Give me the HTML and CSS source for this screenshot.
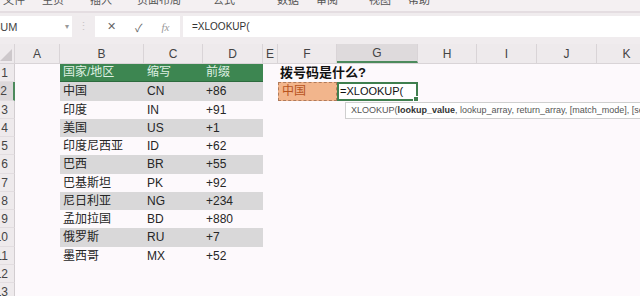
FILE: index.html
```html
<!DOCTYPE html>
<html lang="zh">
<head>
    <meta charset="UTF-8">
    <title>XLOOKUP</title>
    <link rel="stylesheet" href="styles.css">
</head>
<body>
    <div class="ribbon">
        <span class="tab w39">文件</span>
        <span class="tab w48">主页</span>
        <span class="tab w47">插入</span>
        <span class="tab w76">页面布局</span>
        <span class="tab w64">公式</span>
        <span class="tab w39">数据</span>
        <span class="tab w53">审阅</span>
        <span class="tab w39">视图</span>
        <span class="tab">帮助</span>
    </div>

    <div class="formula-bar">
        <div class="name-box"><span class="name">SUM</span><span class="arrow">▾</span></div>
        <div class="grip">⋮</div>
        <div class="fx-buttons">
            <span class="cancel">✕</span>
            <span class="enter">✓</span>
            <span class="fx">fx</span>
        </div>
        <div class="formula-input">=XLOOKUP(</div>
    </div>

    <div class="sheet">
        <div class="row col-head">
            <div class="corner"><svg width="12" height="12" viewBox="0 0 12 12"><polygon points="12,0 12,12 0,12" fill="#cdc8cb"/></svg></div>
            <div>A</div><div>B</div><div>C</div><div>D</div><div>E</div><div>F</div>
            <div class="active">G</div><div>H</div><div>I</div><div>J</div><div>K</div>
        </div>

        <div class="row">
            <div class="rh">1</div><div></div>
            <div class="cell head">国家/地区</div><div class="cell head">缩写</div><div class="cell head">前缀</div>
            <div></div><div class="cell title">拨号码是什么?</div>
        </div>
        <div class="row">
            <div class="rh active">2</div><div></div>
            <div class="cell alt">中国</div><div class="cell alt">CN</div><div class="cell alt">+86</div>
            <div></div><div class="cell lookup">中国</div>
            <div class="cell editing">=XLOOKUP(
                <div class="tooltip">XLOOKUP(<b>lookup_value</b>, lookup_array, return_array, [match_mode], [search_mode])</div>
            </div>
        </div>
        <div class="row">
            <div class="rh">3</div><div></div>
            <div class="cell">印度</div><div class="cell">IN</div><div class="cell">+91</div>
        </div>
        <div class="row">
            <div class="rh">4</div><div></div>
            <div class="cell alt">美国</div><div class="cell alt">US</div><div class="cell alt">+1</div>
        </div>
        <div class="row">
            <div class="rh">5</div><div></div>
            <div class="cell">印度尼西亚</div><div class="cell">ID</div><div class="cell">+62</div>
        </div>
        <div class="row">
            <div class="rh">6</div><div></div>
            <div class="cell alt">巴西</div><div class="cell alt">BR</div><div class="cell alt">+55</div>
        </div>
        <div class="row">
            <div class="rh">7</div><div></div>
            <div class="cell">巴基斯坦</div><div class="cell">PK</div><div class="cell">+92</div>
        </div>
        <div class="row">
            <div class="rh">8</div><div></div>
            <div class="cell alt">尼日利亚</div><div class="cell alt">NG</div><div class="cell alt">+234</div>
        </div>
        <div class="row">
            <div class="rh">9</div><div></div>
            <div class="cell">孟加拉国</div><div class="cell">BD</div><div class="cell">+880</div>
        </div>
        <div class="row">
            <div class="rh">10</div><div></div>
            <div class="cell alt">俄罗斯</div><div class="cell alt">RU</div><div class="cell alt">+7</div>
        </div>
        <div class="row">
            <div class="rh">11</div><div></div>
            <div class="cell">墨西哥</div><div class="cell">MX</div><div class="cell">+52</div>
        </div>
        <div class="row">
            <div class="rh">12</div>
        </div>
        <div class="row">
            <div class="rh">13</div>
        </div>
    </div>
</body>
</html>
```

FILE: styles.css
```css
body {
    margin: 0;
    width: 640px;
    height: 296px;
    overflow: hidden;
    background-color: #fdf9fc;
    font-family: 'Liberation Sans', 'Noto Sans CJK SC', sans-serif;
    color: #262626;
}

/* Ribbon tabs, cut off at the top */
.ribbon {
    display: flex;
    height: 11px;
    padding-left: 3px;
    overflow: hidden;
    background-color: #f4f0f2;
    border-bottom: 2px solid #e4dde1;
}

.tab {
    font-size: 11px;
    line-height: 11px;
    margin-top: -5px;
    color: #555;
    flex-shrink: 0;
}

.w39 { width: 39px; }
.w47 { width: 47px; }
.w48 { width: 48px; }
.w53 { width: 53px; }
.w64 { width: 64px; }
.w76 { width: 76px; }

/* Formula bar */
.formula-bar {
    display: flex;
    align-items: center;
    height: 31px;
    padding-bottom: 0;
    background-color: #f0ecee;
}

.name-box,
.fx-buttons,
.formula-input {
    height: 21px;
    background-color: #fff;
    display: flex;
    align-items: center;
    margin-top: -4px;
}

.name-box {
    width: 72px;
    overflow: hidden;
    font-size: 11px;
    color: #444;
}

.name {
    margin-left: -7px;
    flex: 1;
}

.arrow {
    font-size: 8px;
    color: #999;
    margin-right: 3px;
}

.grip {
    width: 23px;
    text-align: center;
    color: #c9c3c7;
    font-size: 11px;
    margin-top: -4px;
}

.fx-buttons {
    width: 85px;
    font-size: 11px;
    color: #666;
}

.cancel { margin-left: 12px; }
.enter { margin-left: 19px; }

.fx {
    margin-left: 19px;
    font-family: 'Liberation Serif', serif;
    font-style: italic;
    color: #999;
}

.formula-input {
    flex: 1;
    margin-left: 3px;
    padding-left: 9px;
    font-size: 10px;
    color: #333;
}

/* Sheet grid */
.sheet {
    overflow: hidden;
}

.row {
    display: grid;
    grid-template-columns: 15px 45px 84px 59px 60px 15px 59px 81px 59px 60px 60px 60px;
    height: 18.25px;
}

.col-head {
    height: 20px;
    background-color: #eeeaec;
    border-bottom: 1px solid #d9d4d7;
    box-sizing: border-box;
    font-size: 12px;
    color: #444;
}

.col-head > div {
    display: flex;
    align-items: center;
    justify-content: center;
    border-right: 1px solid #d9d4d7;
}

.col-head > div.active {
    background-color: #dedadc;
    border-bottom: 2px solid #4c8a5c;
}

.col-head .corner {
    align-items: flex-end;
    justify-content: flex-start;
    padding-bottom: 2px;
}

.rh {
    background-color: #eeeaec;
    border-right: 1px solid #d2cdd0;
    border-bottom: 1px solid #e2dde0;
    box-sizing: border-box;
    overflow: hidden;
    white-space: nowrap;
    direction: rtl;
    padding-right: 6px;
    font-size: 12px;
    line-height: 18px;
    color: #444;
}

.rh.active {
    background-color: #dcd8da;
    border-right: 2px solid #4c8a5c;
}

.cell {
    font-size: 12px;
    line-height: 18px;
    padding-left: 3px;
    white-space: nowrap;
}

.cell.head {
    background-color: #3d8651;
    color: #dff0e2;
    border-bottom: 1px solid #2d6b3e;
    line-height: 17px;
}

.cell.alt {
    background-color: #d9d8d9;
}

.cell.title {
    font-size: 13px;
    font-weight: bold;
    color: #111;
    padding-left: 2px;
}

.cell.lookup {
    background-color: #f2b58c;
    color: #b8541e;
    border: 1px dashed #b07a5a;
    box-sizing: border-box;
    line-height: 16px;
}

.cell.editing {
    position: relative;
    background-color: #fff;
    border: 2px solid #3f7f4e;
    box-sizing: border-box;
    font-size: 11px;
    line-height: 14px;
    color: #111;
    padding-left: 1px;
}

.cell.editing::after {
    content: '';
    position: absolute;
    right: -3px;
    bottom: -3px;
    width: 4px;
    height: 4px;
    background-color: #3f7f4e;
    border: 1px solid #fff;
}

.tooltip {
    position: absolute;
    left: 6px;
    top: 18px;
    width: 320px;
    height: 15px;
    padding-left: 5px;
    background-color: #fff;
    border: 1px solid #cfcfcf;
    font-size: 9px;
    line-height: 15px;
    color: #555;
    z-index: 2;
}

.tooltip b {
    color: #333;
}
```
